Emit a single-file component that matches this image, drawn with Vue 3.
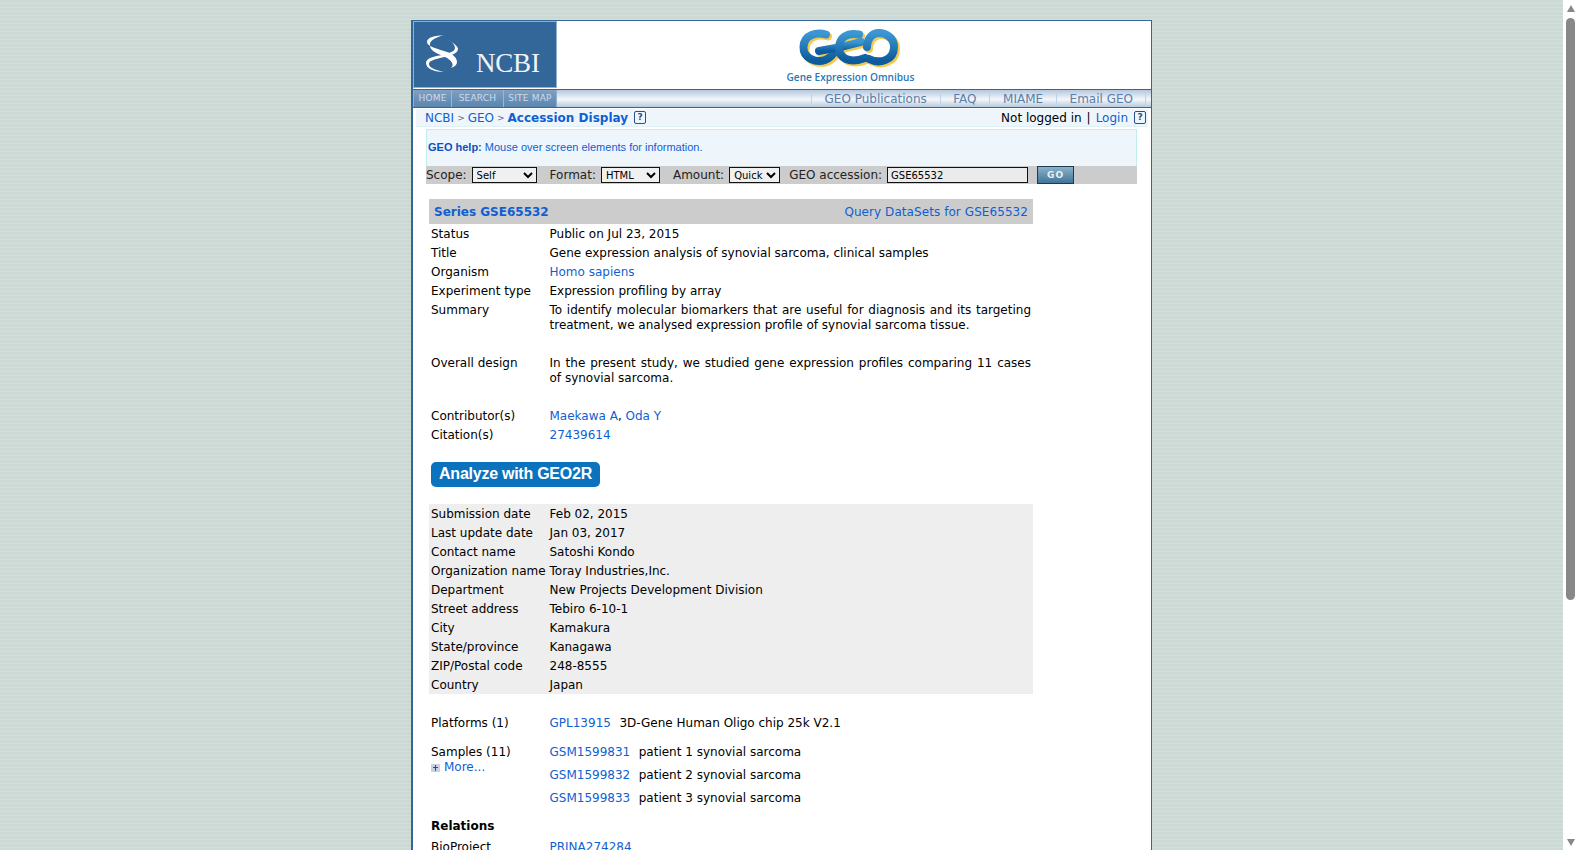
<template>
  <div class="page">
    <div class="main">
      <div class="wrap">
        <header class="head">
          <div class="ncbi">
            <svg class="helix" width="36" height="40" viewBox="0 0 36 40">
              <path d="M19 1 C10 2 2 3 2 8 C2 13 14 15 22 18 C28 20 32 24 32 28 C32 31 29 33 26 34 C29 31 28 28 22 24 C15 20 4 18 5 10 C5 6 12 3 19 1Z" fill="#fff"/>
              <path d="M24 6 C28 9 33 12 33 15 C33 20 24 22 15 24 C8 26 4 27 4 30 C4 34 11 36 19 38 C10 38 1 35 1 29 C1 24 10 22 17 21 C23 19 30 18 30 14 C30 11 27 8 24 6Z" fill="#fff"/>
            </svg>
            <span class="ncbi-name">NCBI</span>
          </div>
          <div class="geo">
            <svg class="geo-mark" width="110" height="46" viewBox="0 0 110 46">
              <defs>
                <linearGradient id="geoBlue" x1="0" y1="0" x2="0" y2="1">
                  <stop offset="0" stop-color="#3a96d4"/>
                  <stop offset="1" stop-color="#0d5a9c"/>
                </linearGradient>
              </defs>
              <g fill="none" stroke-linecap="round" stroke-width="8">
                <path v-for="d in geoStrokes" :key="'s' + d" :d="d" stroke="#f3cb4c" transform="translate(2 2)"/>
                <path v-for="d in geoStrokes" :key="d" :d="d" stroke="url(#geoBlue)"/>
              </g>
            </svg>
            <span class="geo-name">Gene Expression Omnibus</span>
          </div>
        </header>

        <nav class="navbar">
          <div class="nav-left">
            <a class="nl" v-for="n in leftNav" :key="n">{{ n }}</a>
          </div>
          <div class="nav-right">
            <a class="nr" v-for="n in rightNav" :key="n">{{ n }}</a>
          </div>
        </nav>

        <div class="crumbs">
          <div class="crumb-left">
            <a>NCBI</a><span class="gt">&gt;</span><a>GEO</a><span class="gt">&gt;</span><a class="here">Accession Display</a>
            <span class="q">?</span>
          </div>
          <div class="crumb-right">
            <span>Not logged in</span><span class="pipe">|</span><a>Login</a><span class="q">?</span>
          </div>
        </div>

        <div class="help"><b>GEO help:</b> Mouse over screen elements for information.</div>

        <div class="search">
          <label>Scope:</label>
          <select class="s1"><option>Self</option></select>
          <label class="gap1">Format:</label>
          <select class="s2"><option>HTML</option></select>
          <label class="gap1">Amount:</label>
          <select class="s3"><option>Quick</option></select>
          <label class="gap2">GEO accession:</label>
          <input class="acc" value="GSE65532" />
          <button class="go">GO</button>
        </div>

        <section class="record">
          <div class="series">
            <a class="series-id">Series GSE65532</a>
            <a class="query">Query DataSets for GSE65532</a>
          </div>

          <div class="row"><div class="k">Status</div><div>Public on Jul 23, 2015</div></div>
          <div class="row"><div class="k">Title</div><div>Gene expression analysis of synovial sarcoma, clinical samples</div></div>
          <div class="row"><div class="k">Organism</div><div><a>Homo sapiens</a></div></div>
          <div class="row"><div class="k">Experiment type</div><div>Expression profiling by array</div></div>
          <div class="row tall"><div class="k">Summary</div><div class="just">To identify molecular biomarkers that are useful for diagnosis and its targeting treatment, we analysed expression profile of synovial sarcoma tissue.</div></div>
          <div class="row tall"><div class="k">Overall design</div><div class="just">In the present study, we studied gene expression profiles comparing 11 cases of synovial sarcoma.</div></div>
          <div class="row"><div class="k">Contributor(s)</div><div><a>Maekawa A</a>, <a>Oda Y</a></div></div>
          <div class="row"><div class="k">Citation(s)</div><div><a>27439614</a></div></div>

          <a class="geo2r">Analyze with GEO2R</a>

          <div class="meta">
            <div class="row" v-for="m in meta" :key="m[0]"><div class="k">{{ m[0] }}</div><div>{{ m[1] }}</div></div>
          </div>

          <div class="row platforms">
            <div class="k">Platforms (1)</div>
            <div><a class="acc-link">GPL13915</a>3D-Gene Human Oligo chip 25k V2.1</div>
          </div>

          <div class="row samples">
            <div class="k">
              <div>Samples (11)</div>
              <div class="more"><span class="plus"></span><a>More...</a></div>
            </div>
            <div>
              <div class="sample" v-for="s in samples" :key="s[0]"><a class="acc-link">{{ s[0] }}</a>{{ s[1] }}</div>
            </div>
          </div>

          <div class="relations">Relations</div>
          <div class="row"><div class="k">BioProject</div><div><a>PRJNA274284</a></div></div>
        </section>
      </div>
    </div>

    <div class="scrollbar" aria-hidden="true">
      <span class="up"></span>
      <span class="thumb"></span>
      <span class="down"></span>
    </div>
  </div>
</template>

<script setup>
const leftNav = ['HOME', 'SEARCH', 'SITE MAP']
const rightNav = ['GEO Publications', 'FAQ', 'MIAME', 'Email GEO']

// logo swooshes: G, the long bar, E, O
const geoStrokes = [
  'M31 9.5 C22 7 9 9 8.5 22 C8 34 22 38 30 35 C35 33 38 30 40 26',
  'M24 26 C38 24 52 21 66 17',
  'M64 9.5 C52 7 44 13 44 23 C44 33 54 39 70 33',
  'M74 34 C84 39 99 36 99 22 C99 12 90 8 84 8 C76 8 72 15 72 22'
]

const meta = [
  ['Submission date', 'Feb 02, 2015'],
  ['Last update date', 'Jan 03, 2017'],
  ['Contact name', 'Satoshi Kondo'],
  ['Organization name', 'Toray Industries,Inc.'],
  ['Department', 'New Projects Development Division'],
  ['Street address', 'Tebiro 6-10-1'],
  ['City', 'Kamakura'],
  ['State/province', 'Kanagawa'],
  ['ZIP/Postal code', '248-8555'],
  ['Country', 'Japan']
]

const samples = [
  ['GSM1599831', 'patient 1 synovial sarcoma'],
  ['GSM1599832', 'patient 2 synovial sarcoma'],
  ['GSM1599833', 'patient 3 synovial sarcoma']
]
</script>

<style>
html, body {
  margin: 0;
  height: 850px;
  overflow: hidden;
}
</style>

<style scoped>
.page {
  display: flex;
  height: 850px;
  font-family: "DejaVu Sans", Verdana, sans-serif;
  font-size: 12px;
  color: #000;
}
.main {
  flex: 1;
  min-width: 0;
  overflow: hidden;
  background: repeating-linear-gradient(to bottom, #ccd9d5 0, #ccd9d5 3px, #d3dfdb 3px, #d3dfdb 4px);
}
a {
  color: #0f5fd3;
  text-decoration: none;
}

.wrap {
  width: 738px;
  margin: 20px auto 0;
  min-height: 830px;
  background: #fff;
  border-left: 2px solid #336699;
  border-right: 1px solid #336699;
}

.head {
  display: flex;
  height: 68px;
  border-top: 1px solid #336699;
}
.ncbi {
  width: 142px;
  height: 65px;
  background: #336699;
  border: 1px solid #8fb0cf;
  display: flex;
  align-items: flex-start;
  color: #fff;
}
.helix {
  margin: 12px 0 0 11px;
}
.ncbi-name {
  font-family: "Liberation Serif", serif;
  font-size: 27px;
  letter-spacing: -0.2px;
  line-height: 28px;
  margin: 27px 0 0 15px;
  color: #f0f4f9;
}
.geo {
  flex: 1;
  display: flex;
  flex-direction: column;
  align-items: center;
}
.geo-mark {
  margin: 4px 0 0 -8px;
}
.geo-name {
  font-family: "Open Sans", sans-serif;
  font-size: 10.1px;
  font-weight: 600;
  color: #2a78b8;
  line-height: 12px;
  margin-left: -7px;
}

.navbar {
  display: flex;
  justify-content: space-between;
  height: 17px;
  border-top: 1px solid #336699;
  border-bottom: 1px solid #336699;
  background: linear-gradient(to bottom, #b3c7de 0, #f4f7fb 55%, #b7cadf 100%);
}
.nav-left {
  display: flex;
  width: 142px;
  background: linear-gradient(to bottom, #7fa0c2, #5a86b0);
  border-left: 1px solid #8fb0cf;
  border-right: 1px solid #8fb0cf;
}
.nl {
  font-size: 9px;
  letter-spacing: 0.2px;
  line-height: 17px;
  color: #cfdcea;
  text-align: center;
  border-right: 1px solid #9db6d1;
}
.nl:nth-child(1) { width: 37px; }
.nl:nth-child(2) { width: 51px; }
.nl:nth-child(3) { flex: 1; border-right: 0; }
.nav-right {
  display: flex;
  padding-right: 5px;
}
.nr {
  color: #5c7fa6;
  font-size: 12px;
  line-height: 18px;
  padding: 0 12.8px 0 12.7px;
  border-left: 1px solid #c0d2e6;
}
.nr:last-child {
  border-right: 1px solid #c0d2e6;
  padding-right: 12px;
}

.crumbs {
  display: flex;
  justify-content: space-between;
  align-items: center;
  height: 17px;
  margin: 1px 3px 0 3px;
  padding: 0 2px 0 9px;
  background: #eef6fc;
  border-bottom: 1px solid #dff0f6;
}
.crumb-left, .crumb-right {
  display: flex;
  align-items: center;
}
.gt {
  font-size: 9px;
  color: #667;
  margin: 0 3px;
}
.here {
  font-weight: bold;
  font-size: 12px;
}
.q {
  width: 10px;
  height: 11px;
  border: 1px solid #26508a;
  border-radius: 2px;
  font-size: 9px;
  font-weight: bold;
  line-height: 11px;
  text-align: center;
  color: #26508a;
  margin-left: 6px;
}
.pipe {
  margin: 0 5px;
}

.help {
  height: 36px;
  margin: 2px 14px 0 13px;
  line-height: 35px;
  padding-left: 1px;
  background: #eef6fc;
  border: 1px solid #bdeef0;
  border-bottom: 0;
  font-family: "Liberation Sans", Arial, sans-serif;
  font-size: 11px;
  color: #0f5fd3;
}
.help b {
  color: #0f4fc0;
}

.search {
  display: flex;
  align-items: center;
  height: 18px;
  margin: 0 14px 0 13px;
  background: #cccccc;
  color: #222;
}
.search label {
  margin-right: 5px;
}
.gap1 { margin-left: 13px; }
.gap2 { margin-left: 9px; }
select {
  height: 16px;
  font-family: "DejaVu Sans", Verdana, sans-serif;
  font-size: 10px;
  background: #f0f0f0;
  border: 1px solid #111;
  border-radius: 0;
  padding: 0;
  box-sizing: border-box;
}
.s1 { width: 65px; }
.s2 { width: 59px; }
.s3 { width: 51px; }
.acc {
  width: 141px;
  height: 16px;
  box-sizing: border-box;
  font-family: "DejaVu Sans", Verdana, sans-serif;
  font-size: 10px;
  background: #ebebeb;
  border: 1px solid #111;
  padding: 0 3px;
}
.go {
  width: 37px;
  height: 18px;
  margin-left: 9px;
  padding: 0;
  border: 1px solid #1d3c52;
  background: linear-gradient(to bottom, #8db0c8, #3f7698);
  color: #e8f0f5;
  font-family: "DejaVu Sans", Verdana, sans-serif;
  font-size: 9px;
  font-weight: bold;
  letter-spacing: 1px;
}

.record {
  width: 604px;
  margin: 15px 0 0 16px;
}
.series {
  display: flex;
  justify-content: space-between;
  align-items: center;
  height: 25px;
  margin-bottom: 1px;
  padding: 0 5px;
  background: #cccccc;
}
.series-id {
  font-weight: bold;
  font-size: 12px;
}
.query {
  letter-spacing: 0.07px;
}
.row {
  display: grid;
  grid-template-columns: 118.5px 1fr;
  padding: 2px;
  line-height: 15px;
}
.tall {
  padding-bottom: 21px;
}
.just {
  text-align: justify;
}
.geo2r {
  display: block;
  width: 169px;
  height: 25px;
  margin: 17px 0 17px 2px;
  background: #0b72bd;
  border-radius: 5px;
  color: #fff;
  font-family: "Liberation Sans", Arial, sans-serif;
  font-weight: bold;
  font-size: 16px;
  letter-spacing: -0.25px;
  line-height: 24px;
  text-align: center;
}
.meta {
  background: #eeeeee;
  padding-top: 1px;
}
.meta .row:last-child {
  padding-bottom: 1px;
}
.platforms {
  margin-top: 20px;
}
.acc-link {
  margin-right: 8.5px;
}
.samples {
  margin-top: 10px;
  padding-bottom: 0;
}
.more {
  display: flex;
  align-items: center;
}
.plus {
  width: 9px;
  height: 8px;
  margin-right: 4px;
  background:
    linear-gradient(#26508a, #26508a) center / 5px 1px no-repeat,
    linear-gradient(#26508a, #26508a) center / 1px 6px no-repeat,
    #c8d4e4;
}
.sample {
  height: 23px;
}
.relations {
  font-weight: bold;
  font-size: 12px;
  line-height: 15px;
  margin: 5px 0 4px 2px;
}

.scrollbar {
  width: 15px;
  background: #fff;
  display: flex;
  flex-direction: column;
  align-items: center;
}
.up, .down {
  width: 0;
  height: 0;
  border-left: 4.5px solid transparent;
  border-right: 4.5px solid transparent;
}
.up {
  margin-top: 5px;
  border-bottom: 7px solid #888;
}
.thumb {
  width: 9px;
  height: 582px;
  margin-top: 6px;
  background: #888;
  border-radius: 5px;
}
.down {
  margin-top: auto;
  margin-bottom: 4px;
  border-top: 7px solid #888;
}
</style>
